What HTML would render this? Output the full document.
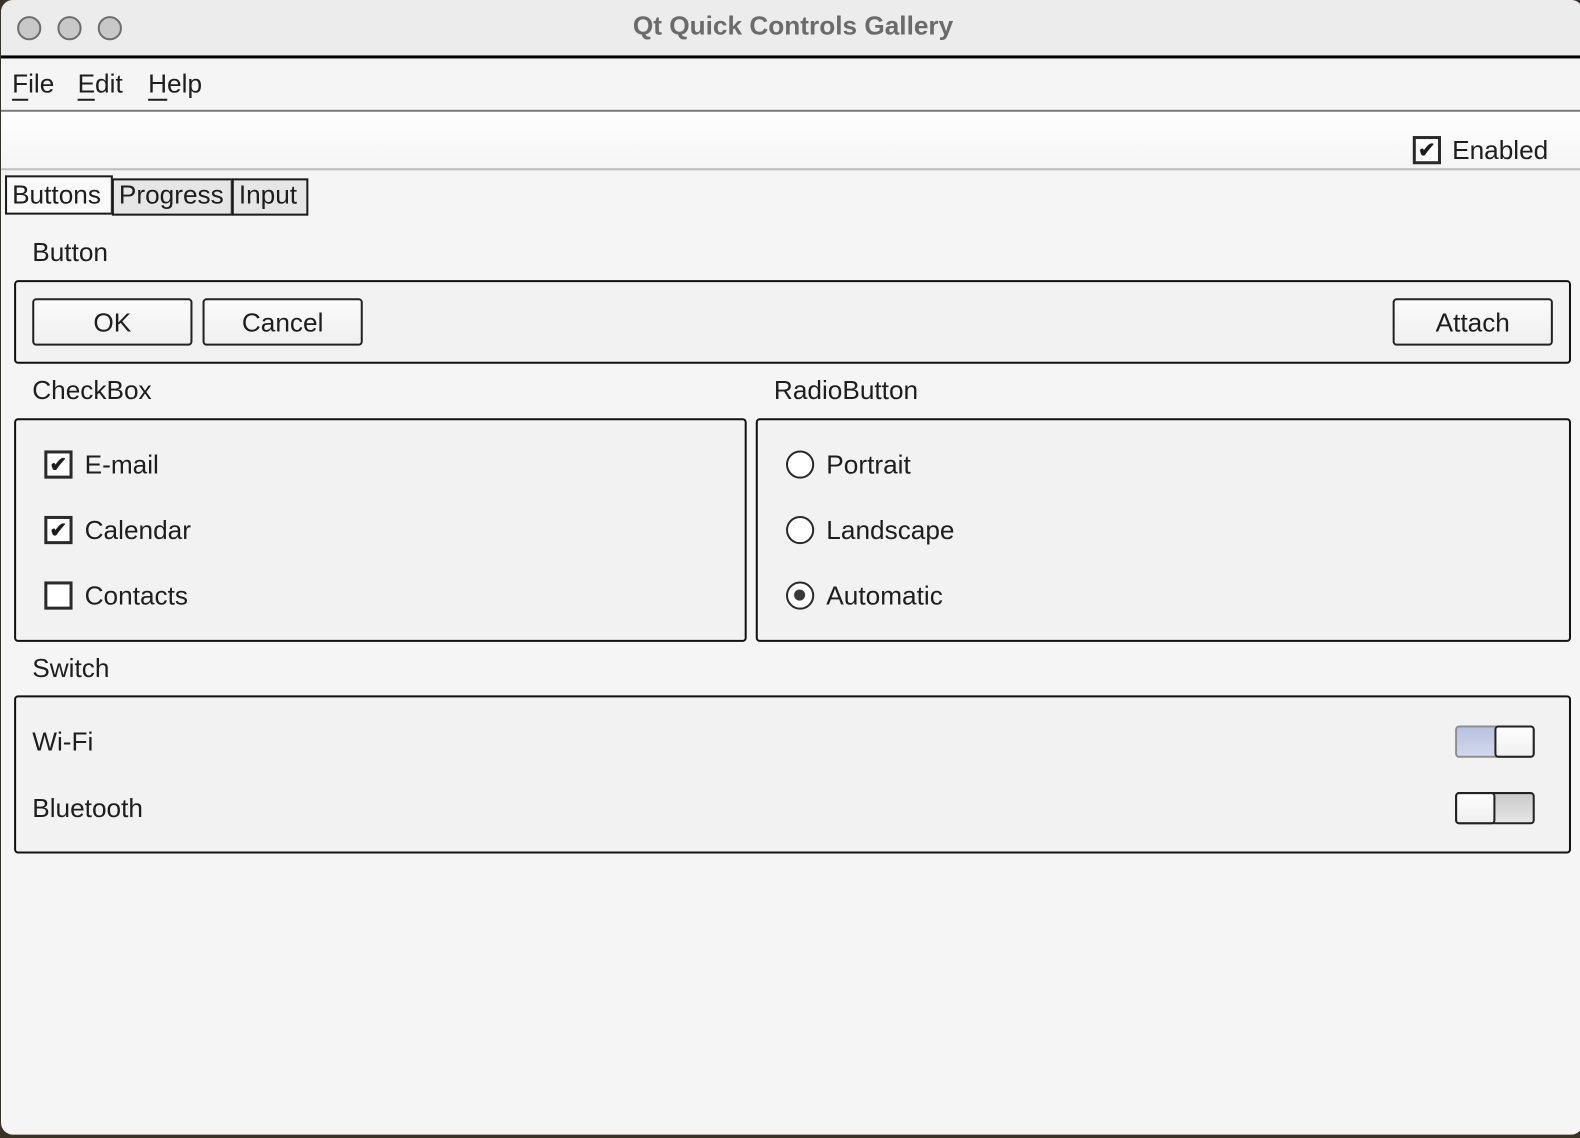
<!DOCTYPE html>
<html><head><meta charset="utf-8"><style>
*{box-sizing:border-box;margin:0;padding:0}
body{width:1580px;height:1138px;background:#3b3226;position:relative;overflow:hidden;font-family:"Liberation Sans",sans-serif;color:#1e1e1e}
.win{position:absolute;left:1px;top:0;width:1570px;height:1126px;background:#f5f5f5;border-radius:12px;overflow:hidden;transform:scale(1.0077);transform-origin:0 0}
.a{position:absolute}
.t{position:absolute;font-size:26px;line-height:30px;white-space:nowrap;margin-top:-2px}
.frame{position:absolute;border:2px solid #111;border-radius:4px;background:#f2f2f2}
.btn{position:absolute;border:2px solid #222;border-radius:4px;background:linear-gradient(#fbfbfb,#efefef);font-size:26px;text-align:center;line-height:44px}
.cb{position:absolute;width:28px;height:28px;border:3px solid #2a2a2a;background:#fff;font-size:21px;font-weight:bold;line-height:23px;text-align:center}
.rb{position:absolute;width:28px;height:28px;border:2.5px solid #2a2a2a;border-radius:50%;background:#fff}
u{text-decoration:none;border-bottom:2px solid #1e1e1e}
</style></head><body>
<div class="win">
 <div class="a" style="left:0;top:0;width:1580px;height:56px;background:#ececec"></div>
 <div class="a" style="left:16px;top:16px;width:24px;height:24px;border-radius:50%;background:#c8c8c8;border:2px solid #6e6e6e"></div>
 <div class="a" style="left:56px;top:16px;width:24px;height:24px;border-radius:50%;background:#c8c8c8;border:2px solid #6e6e6e"></div>
 <div class="a" style="left:96px;top:16px;width:24px;height:24px;border-radius:50%;background:#c8c8c8;border:2px solid #6e6e6e"></div>
 <div class="t" style="left:0;width:1572px;text-align:center;top:12px;font-size:26px;font-weight:bold;color:#6b6b6b">Qt Quick Controls Gallery</div>
 <div class="a" style="left:0;top:55px;width:1580px;height:3px;background:#000"></div>
 <div class="t" style="left:11px;top:70px"><u>F</u>ile</div>
 <div class="t" style="left:76px;top:70px"><u>E</u>dit</div>
 <div class="t" style="left:146px;top:70px"><u>H</u>elp</div>
 <div class="a" style="left:0;top:109px;width:1580px;height:2px;background:#7a7a7a"></div>
 <div class="a" style="left:0;top:111px;width:1580px;height:56px;background:linear-gradient(#fefefe,#f5f5f5)"></div>
 <div class="a" style="left:0;top:167px;width:1580px;height:2px;background:#bdbdbd"></div>
 <div class="cb" style="left:1401px;top:135px">&#10004;</div>
 <div class="t" style="left:1440px;top:136px">Enabled</div>
 <div class="a" style="left:4px;top:174px;width:107px;height:39px;border:2px solid #1a1a1a;background:#fafafa"></div>
 <div class="t" style="left:11px;top:180px">Buttons</div>
 <div class="a" style="left:110px;top:177px;width:120px;height:37px;border:2px solid #1a1a1a;background:#e6e6e6"></div>
 <div class="t" style="left:117px;top:180px">Progress</div>
 <div class="a" style="left:229px;top:177px;width:76px;height:37px;border:2px solid #1a1a1a;background:#e6e6e6"></div>
 <div class="t" style="left:236px;top:180px">Input</div>

 <div class="t" style="left:31px;top:237px">Button</div>
 <div class="frame" style="left:13px;top:278px;width:1545px;height:83px"></div>
 <div class="btn" style="left:31px;top:296px;width:159px;height:47px">OK</div>
 <div class="btn" style="left:200px;top:296px;width:159px;height:47px">Cancel</div>
 <div class="btn" style="left:1381px;top:296px;width:159px;height:47px">Attach</div>

 <div class="t" style="left:31px;top:374px">CheckBox</div>
 <div class="frame" style="left:13px;top:415px;width:727px;height:222px"></div>
 <div class="cb" style="left:43px;top:447px">&#10004;</div>
 <div class="t" style="left:83px;top:448px">E-mail</div>
 <div class="cb" style="left:43px;top:512px">&#10004;</div>
 <div class="t" style="left:83px;top:513px">Calendar</div>
 <div class="cb" style="left:43px;top:577px"></div>
 <div class="t" style="left:83px;top:578px">Contacts</div>

 <div class="t" style="left:767px;top:374px">RadioButton</div>
 <div class="frame" style="left:749px;top:415px;width:809px;height:222px"></div>
 <div class="rb" style="left:779px;top:447px"></div>
 <div class="t" style="left:819px;top:448px">Portrait</div>
 <div class="rb" style="left:779px;top:512px"></div>
 <div class="t" style="left:819px;top:513px">Landscape</div>
 <div class="rb" style="left:779px;top:577px"><div class="a" style="left:6px;top:6px;width:11px;height:11px;border-radius:50%;background:#3a3a3a"></div></div>
 <div class="t" style="left:819px;top:578px">Automatic</div>

 <div class="t" style="left:31px;top:650px">Switch</div>
 <div class="frame" style="left:13px;top:690px;width:1545px;height:157px"></div>
 <div class="t" style="left:31px;top:723px">Wi-Fi</div>
 <div class="t" style="left:31px;top:789px">Bluetooth</div>
 <div class="a" style="left:1443px;top:720px;width:79px;height:32px;border:2px solid #8e8e8e;border-radius:4px;background:linear-gradient(#b8c1de,#d2d8ec)"></div>
 <div class="a" style="left:1482px;top:720px;width:40px;height:32px;border:2px solid #222;border-radius:4px;background:linear-gradient(#fefefe,#efefef)"></div>
 <div class="a" style="left:1443px;top:786px;width:79px;height:32px;border:2px solid #222;border-radius:4px;background:linear-gradient(#c9c9c9,#e6e6e6)"></div>
 <div class="a" style="left:1443px;top:786px;width:40px;height:32px;border:2px solid #222;border-radius:4px;background:linear-gradient(#fefefe,#efefef)"></div>
</div>
</body></html>
